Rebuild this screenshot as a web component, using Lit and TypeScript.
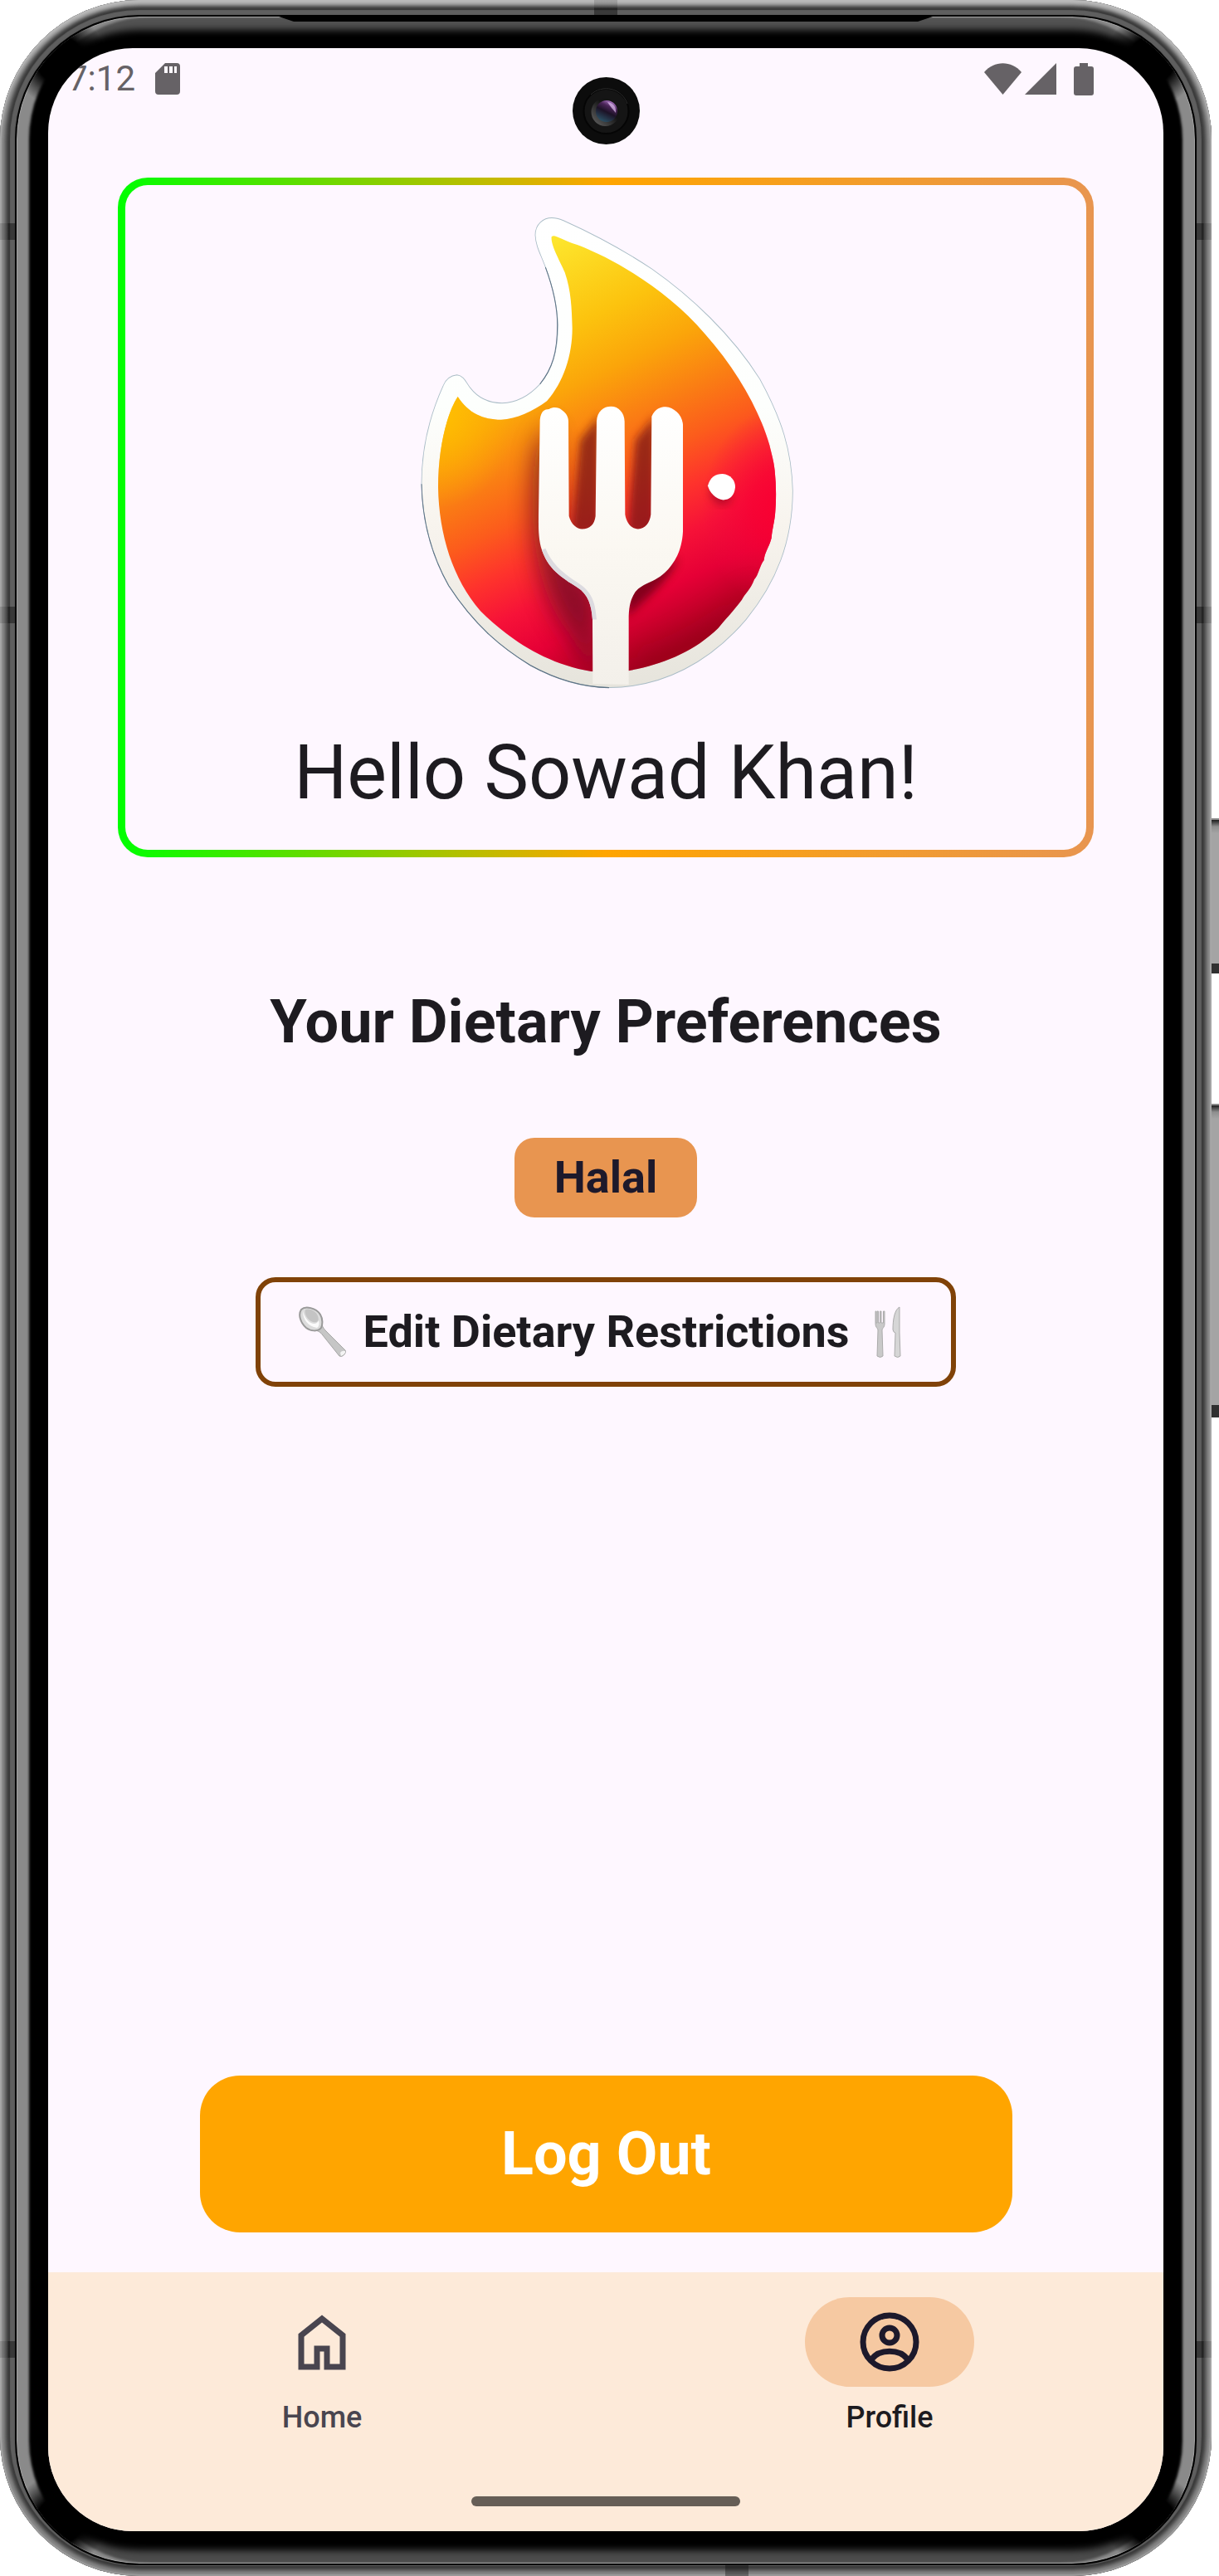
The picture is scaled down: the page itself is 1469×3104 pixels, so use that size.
import { LitElement, html, css, svg } from "lit";
import { customElement, property } from "lit/decorators.js";

@customElement("flame-logo")
class FlameLogo extends LitElement {
  static styles = css`
    :host { display: block; }
    svg { display: block; width: 460px; height: 576px; }
  `;

  render() {
    const inner = "M557,160 C562,156 568,157 576,160 C600,168 625,178 650,184 C690,196 710,205 750,220 C880,275 1010,350 1110,445 C1230,555 1310,675 1345,775 C1352,800 1360,820 1364,850 C1369,890 1370,930 1366,970 C1364,1000 1355,1020 1352,1050 C1342,1080 1328,1090 1325,1115 C1310,1130 1305,1160 1290,1172 C1278,1200 1255,1215 1245,1232 C1215,1265 1180,1295 1160,1315 C1060,1395 930,1430 800,1446 L700,1443 C530,1420 400,1345 300,1265 C200,1170 150,1040 147,900 C147,780 180,680 218,632 C255,680 310,700 375,700 C430,698 490,675 540,645 C600,590 632,510 632,430 C630,370 628,320 605,265 C590,235 553,185 557,160Z";
    const outer = "M558,104 C528,104 498,122 498,155 C500,190 520,215 535,250 C560,305 578,360 580,420 C580,500 560,550 515,595 C470,635 420,650 378,651 C330,651 290,635 262,605 C248,590 240,570 215,568 C190,570 175,580 165,600 C115,690 87,790 87,890 C90,1010 130,1110 185,1190 C280,1310 380,1375 480,1425 C580,1470 680,1490 765,1491 C960,1490 1130,1415 1260,1290 C1370,1180 1428,1060 1429,910 C1425,790 1390,700 1310,580 C1210,450 1060,335 920,255 C800,190 690,145 600,112 C585,107 572,104 558,104Z";
    const fork = "M515,700 C520,672 532,670 548,669 C565,660 585,665 592,670 C605,677 618,688 618,705 L620,985 C628,1010 650,1023 667,1023 C695,1023 712,1010 716,985 L720,705 C722,675 745,661 772,661 C800,661 820,680 821,705 L823,980 C828,1005 845,1022 870,1023 C895,1022 912,1005 916,980 L919,690 C932,668 950,662 970,662 C1000,664 1030,685 1032,715 L1032,1030 C1028,1090 1000,1122 975,1145 C930,1185 880,1180 855,1215 C840,1235 836,1260 836,1290 L836,1482 L706,1480 L705,1290 C702,1250 690,1215 650,1195 C590,1165 545,1140 522,1085 C508,1050 510,1010 510,985Z";
    return html`
      <svg viewBox="22 36 460 576" role="img" aria-label="Flame with a fork">
        <defs>
          <linearGradient id="fire" gradientUnits="userSpaceOnUse" x1="133" y1="342" x2="599" y2="1538">
            <stop offset="0" stop-color="#fde52c" />
            <stop offset=".2" stop-color="#fcc30e" />
            <stop offset=".33" stop-color="#fba50a" />
            <stop offset=".46" stop-color="#fa7c14" />
            <stop offset=".56" stop-color="#fc5c1c" />
            <stop offset=".66" stop-color="#fe332c" />
            <stop offset=".76" stop-color="#f61238" />
            <stop offset=".86" stop-color="#e60036" />
            <stop offset="1" stop-color="#a80020" />
          </linearGradient>
          <linearGradient id="rim" x1="0" y1="0" x2="0" y2="1">
            <stop offset="0" stop-color="#ffffff" />
            <stop offset=".4" stop-color="#fdfffd" />
            <stop offset=".65" stop-color="#f8f4ee" />
            <stop offset="1" stop-color="#e6e4dc" />
          </linearGradient>
          <linearGradient id="steel" x1="0" y1="0" x2="0" y2="1">
            <stop offset="0" stop-color="#ffffff" />
            <stop offset=".5" stop-color="#fbf8f2" />
            <stop offset="1" stop-color="#f3f0ea" />
          </linearGradient>
          <radialGradient id="left-glow" gradientUnits="userSpaceOnUse" cx="150" cy="680" r="280">
            <stop offset="0" stop-color="#ffc000" />
            <stop offset="1" stop-color="#ffb000" stop-opacity="0" />
          </radialGradient>
          <radialGradient id="right-glow" gradientUnits="userSpaceOnUse" cx="1400" cy="960" r="300">
            <stop offset="0" stop-color="#fa0030" />
            <stop offset=".4" stop-color="#f80034" stop-opacity=".7" />
            <stop offset="1" stop-color="#f20840" stop-opacity="0" />
          </radialGradient>
          <clipPath id="flame"><path d=${inner} /></clipPath>
          <filter id="soft" x="-40%" y="-30%" width="180%" height="160%"><feGaussianBlur stdDeviation="42" /></filter>
          <filter id="tight" x="-30%" y="-30%" width="160%" height="160%"><feGaussianBlur stdDeviation="14" /></filter>
        </defs>
        <g transform="scale(.33333 .40816)">
          <path d=${outer} fill="url(#rim)" stroke="#a9bcc6" stroke-width="2.5" />
          <path d="M535,250 C560,305 578,360 578,420 C578,500 560,550 515,595 M87,890 C90,1010 130,1110 185,1190 C280,1310 380,1375 480,1425 C580,1470 680,1490 765,1491" fill="none" stroke="#5d7385" stroke-width="3" />
          <path d=${inner} fill="url(#fire)" />
          <g clip-path="url(#flame)">
            <rect width="1560" height="1568" fill="url(#left-glow)" />
            <rect width="1560" height="1568" fill="url(#right-glow)" />
            <path d="M500,780 L560,720 L620,1100 L720,1200 L720,1480 L620,1330 C520,1230 460,1050 500,780Z" fill="#6a0a20" opacity=".75" filter="url(#soft)" />
            <path d="M660,760 L730,690 V1040 H630Z M860,760 L930,690 V1040 H830Z" fill="#7a1418" opacity=".75" filter="url(#tight)" />
            <path d="M1020,1110 C960,1190 900,1230 830,1280 V1180Z" fill="#6a0018" opacity=".8" filter="url(#tight)" />
            <path d="M1125,900 C1140,960 1190,960 1215,925Z" fill="#80001c" opacity=".6" filter="url(#tight)" />
            <path d="M1300,1200 C1200,1400 900,1480 830,1460 L860,1400 C1000,1380 1150,1290 1300,1200Z" fill="#8c0014" opacity=".5" filter="url(#soft)" />
          </g>
          <path d=${fork} fill="url(#steel)" />
          <path d="M522,1085 C545,1140 590,1165 650,1195 C690,1215 702,1250 705,1290 L720,1290 C715,1235 700,1205 650,1180 C590,1150 555,1120 535,1080Z" fill="#dddbe0" />
          <path d="M1122,895 C1130,870 1150,860 1175,860 C1205,862 1222,880 1221,900 C1218,925 1200,937 1178,937 C1150,935 1128,915 1122,895Z" fill="#fff" />
        </g>
      </svg>
    `;
  }
}

@customElement("status-bar")
class StatusBar extends LitElement {
  @property() time = "";

  static styles = css`
    :host {
      display: flex;
      justify-content: space-between;
      align-items: center;
      padding: 13px 84px 0 24px;
      color: #666266;
      font-size: 42px;
      line-height: 48px;
    }
    .group { display: flex; align-items: center; }
    .time { padding-right: 24px; }
    svg { display: block; fill: currentColor; }
    .signal { padding: 0 21px 0 4px; }
  `;

  render() {
    return html`
      <div class="group">
        <span class="time">${this.time}</span>
        <svg width="30" height="38" viewBox="0 0 30 38" aria-hidden="true">
          <path fill-rule="evenodd" d="M12 0H26a4 4 0 0 1 4 4V34a4 4 0 0 1-4 4H4a4 4 0 0 1-4-4V12ZM11 4v8h4V4ZM17 4v8h4V4ZM23 4v8h3V4Z" />
        </svg>
      </div>
      <div class="group">
        <svg width="45" height="38" viewBox="0 0 45 38" aria-hidden="true"><path d="M0 11C12-3.500 33-3.500 45 11L22.500 38Z" /></svg>
        <svg class="signal" width="38" height="38" viewBox="0 0 38 38" aria-hidden="true"><path d="M38 0V38H0Z" /></svg>
        <svg width="24" height="39" viewBox="0 0 24 39" aria-hidden="true"><path d="M7 0H17V4H21a3 3 0 0 1 3 3V36a3 3 0 0 1-3 3H3a3 3 0 0 1-3-3V7a3 3 0 0 1 3-3H7Z" /></svg>
      </div>
    `;
  }
}

interface Tab {
  label: string;
  href: string;
  active: boolean;
  icon: unknown;
}

@customElement("tab-bar")
class TabBar extends LitElement {
  static styles = css`
    :host { display: block; background: #fdead9; }
    .tabs { display: flex; gap: 24px; padding-top: 30px; }
    .tab {
      flex: 1;
      display: flex;
      flex-direction: column;
      align-items: center;
      gap: 16px;
      color: #49454f;
      font-size: 36px;
      line-height: 42px;
      font-weight: 500;
      text-decoration: none;
    }
    .tab.active { color: #1d1b20; }
    .pill {
      display: flex;
      align-items: center;
      justify-content: center;
      width: 204px;
      height: 108px;
      border-radius: 54px;
    }
    .active .pill { background: #f6c9a2; color: #1d192b; }
    .pill svg { display: block; width: 72px; height: 72px; }
    .handle {
      width: 324px;
      height: 12px;
      margin: 74px auto 30px;
      border-radius: 6px;
      background: #665e56;
    }
    :host { display: flow-root; }
  `;

  private tabs: Tab[] = [
    {
      label: "Home",
      href: "#home",
      active: false,
      icon: svg`<path d="M11 28 36 8 61 28V66H42V44H30V66H11Z" fill="none" stroke="currentColor" stroke-width="7" />`,
    },
    {
      label: "Profile",
      href: "#profile",
      active: true,
      icon: svg`
        <circle cx="36" cy="36" r="32" fill="none" stroke="currentColor" stroke-width="7" />
        <circle cx="36" cy="28" r="9" fill="none" stroke="currentColor" stroke-width="7" />
        <path d="M14 57C24 44 48 44 58 57" fill="none" stroke="currentColor" stroke-width="7" />`,
    },
  ];

  render() {
    return html`
      <nav class="tabs">
        ${this.tabs.map(
          (t) => html`
            <a class="tab ${t.active ? "active" : ""}" href=${t.href}>
              <span class="pill"><svg viewBox="0 0 72 72" aria-hidden="true">${t.icon}</svg></span>
              ${t.label}
            </a>
          `,
        )}
      </nav>
      <div class="handle"></div>
    `;
  }
}

@customElement("profile-screen")
class ProfileScreen extends LitElement {
  @property() name = "";
  @property({ type: Array }) preferences: string[] = [];

  static styles = css`
    :host {
      flex: 1;
      display: flex;
      flex-direction: column;
      align-items: center;
      color: #1d1b20;
    }
    h1, h2, ul { margin: 0; padding: 0; }
    .card {
      align-self: stretch;
      margin: 95px 84px 0;
      padding: 9px;
      border-radius: 36px;
      background: linear-gradient(90deg, #00ff00, #ffa500 50%, #e89550);
    }
    .inner {
      display: flex;
      flex-direction: column;
      align-items: center;
      gap: 50px;
      padding: 33px 0 43px;
      border-radius: 27px;
      background: #fef7ff;
    }
    flame-logo { padding-left: 2px; }
    h1 { font-size: 90px; line-height: 99px; font-weight: 400; }
    h2 { margin-top: 156px; font-size: 72px; line-height: 86px; font-weight: 700; }
    .chips { display: flex; gap: 24px; margin-top: 96px; list-style: none; }
    .chip {
      padding: 0 48px;
      border-radius: 24px;
      background: #e89550;
      color: #1d192b;
      font-size: 54px;
      line-height: 96px;
      font-weight: 700;
    }
    button { font-family: inherit; cursor: pointer; }
    .edit {
      display: flex;
      align-items: center;
      gap: 20px;
      margin-top: 72px;
      padding: 0 46px;
      border: 6px solid #804208;
      border-radius: 24px;
      background: transparent;
      color: #1d1b20;
      font-size: 54px;
      line-height: 120px;
      font-weight: 700;
    }
    .edit svg { display: block; }
    .logout {
      align-self: stretch;
      margin: auto 182px 48px 183px;
      padding: 0;
      border: 0;
      border-radius: 48px;
      background: #ffa500;
      color: #fff;
      font-size: 72px;
      line-height: 189px;
      font-weight: 700;
    }
  `;

  render() {
    return html`
      <section class="card">
        <div class="inner">
          <flame-logo></flame-logo>
          <h1>Hello ${this.name}!</h1>
        </div>
      </section>
      <h2>Your Dietary Preferences</h2>
      <ul class="chips">
        ${this.preferences.map((p) => html`<li class="chip">${p}</li>`)}
      </ul>
      <button class="edit" type="button">
        <svg width="58" height="62" viewBox="0 0 58 62" aria-hidden="true">
          <path d="M28 22C29 26 31 28 34 31L56 53C58 56 53 62 49 60L29 35C26 31 24 30 20 29Z" fill="#c6c6c6" stroke="#a4a4a4" />
          <path d="M50 56Q52 53 56 54Q57 57 51 60Z" fill="#f4f4f4" />
          <path d="M3 4C8-1 21 2 26 10C29 15 29 22 27 26C23 31 14 30 9 26C2 20-1 10 3 4Z" fill="#dcdcdc" stroke="#999" stroke-width="2" />
          <path d="M5 6C5 16 11 24 22 26C25 24 25 20 24 17C21 25 9 21 5 6Z" fill="#fbfbfb" />
          <path d="M8 4C14 2 21 6 23 12C25 18 22 20 17 19C11 17 6 9 8 4Z" fill="#c4c4c4" />
        </svg>
        <span>Edit Dietary Restrictions</span>
        <svg width="57" height="62" viewBox="0 0 57 62" aria-hidden="true">
          <path d="M12 6V21C12 26 15 26 15 29L14 60q4 3 7 0L20 29C20 26 23 26 23 21V6H21.500V20H19V6H17.500V20H15.500V6H14V20H13V6Z" fill="#c9c9c9" stroke="#ababab" />
          <path d="M41 1C35 4 33 16 33 28Q33 31 36 32L35 60q4 3 7 0L41 32Z" fill="#d6d6d6" stroke="#ababab" />
        </svg>
      </button>
      <button class="logout" type="button">Log Out</button>
    `;
  }
}

@customElement("app-root")
class AppRoot extends LitElement {
  static styles = css`
    :host {
      display: grid;
      grid-template-columns: minmax(0, 1fr) 9px;
      min-height: 100vh;
      background: #fff;
      font-family: Roboto, "Noto Sans", sans-serif;
    }
    .rim {
      position: relative;
      display: flex;
      padding: 18px 18px 13px;
      border-radius: 168px;
      background: #5a5a5a;
      box-shadow:
        inset 0 5px 5px #bcbcbc,
        inset 0 0 0 2px #999,
        inset 0 0 5px 7px #8a8a8a,
        inset 0 0 1px 12px #363636,
        inset 0 0 1px 17px #5f5f5f;
    }
    .bezel {
      flex: 1;
      display: flex;
      border-radius: 150px;
      border: 2px solid #000;
      background: #000;
      box-shadow:
        inset 0 0 0 1px #a2a2a2,
        inset 15px 0 3px #8a8a8a,
        inset -15px 0 3px #8a8a8a,
        inset 0 16px 8px #525252,
        inset 0 -16px 8px #4c4c4c;
    }
    .glass {
      flex: 1;
      display: flex;
      padding: 38px 38px 39px;
      border-radius: 148px;
      background:
        radial-gradient(circle at 52px 52px, #000 28px, transparent 56px),
        radial-gradient(circle at calc(100% - 52px) 52px, #000 28px, transparent 56px),
        radial-gradient(circle at 52px calc(100% - 52px), #000 28px, transparent 56px),
        radial-gradient(circle at calc(100% - 52px) calc(100% - 52px), #000 28px, transparent 56px);
    }
    .screen {
      flex: 1;
      display: flex;
      flex-direction: column;
      min-width: 0;
      border-radius: 102px;
      overflow: hidden;
      background: #fef7ff;
    }
    .speaker {
      position: absolute;
      top: 20px;
      left: 336px;
      right: 336px;
      height: 6px;
      background: #000;
      clip-path: polygon(0 0, 100% 0, calc(100% - 18px) 100%, 18px 100%);
    }
    .camera {
      position: absolute;
      top: 93px;
      left: calc(50% - 40px);
      width: 81px;
      height: 81px;
    }
    .seam { position: absolute; }
    .seam.left, .seam.right { width: 18px; height: 20px; }
    .seam.left { left: 0; background: linear-gradient(90deg, #0002 9px, #0006 10px); }
    .seam.right { right: 0; background: linear-gradient(270deg, #0002 9px, #0006 10px); }
    .upper { top: 269px; }
    .middle { top: 731px; }
    .lower { bottom: 263px; }
    .seam.top {
      top: 0;
      left: calc(50% - 14px);
      width: 28px;
      height: 18px;
      background: linear-gradient(#0002 9px, #0006 10px);
    }
    .seam.bottom {
      bottom: 0;
      left: calc(60% - 2px);
      width: 28px;
      height: 13px;
      background: #0005;
    }
    .rail { padding-top: 986px; }
    .key {
      box-sizing: border-box;
      height: 187px;
      border-top: 2px solid #8a8a8a;
      border-bottom: 12px solid #303030;
      background: linear-gradient(#1c1c1c, #8e8e8e 8px, #a4a4a4 16px);
    }
    .key.volume { height: 378px; margin-top: 157px; border-bottom-width: 15px; }
  `;

  render() {
    return html`
      <div class="rim">
        <div class="bezel">
          <div class="glass">
            <div class="screen">
              <status-bar time="7:12"></status-bar>
              <profile-screen name="Sowad Khan" .preferences=${["Halal"]}></profile-screen>
              <tab-bar></tab-bar>
            </div>
          </div>
        </div>
        <div class="speaker"></div>
        <svg class="camera" viewBox="0 0 81 81" aria-hidden="true">
          <defs>
            <linearGradient id="lens" x1=".8" y1="0" x2=".3" y2="1">
              <stop offset="0" stop-color="#c58be0" />
              <stop offset=".3" stop-color="#4a2458" />
              <stop offset=".55" stop-color="#1c1226" />
              <stop offset="1" stop-color="#2c5468" />
            </linearGradient>
            <linearGradient id="ring" x1="1" y1="0" x2="0" y2="1">
              <stop offset=".4" stop-color="#141414" />
              <stop offset="1" stop-color="#6a6a6a" />
            </linearGradient>
          </defs>
          <circle cx="40.500" cy="40.500" r="40.500" fill="#0c0c0c" />
          <circle cx="40.500" cy="41" r="27" fill="#151515" stroke="#050505" stroke-width="2" />
          <path d="M22 21A27 27 0 0 1 66 32" fill="none" stroke="#2c2c2c" />
          <circle cx="39.500" cy="42" r="17" fill="url(#ring)" />
          <circle cx="41" cy="41" r="13" fill="url(#lens)" />
          <path d="M42 30C49 31 53 36 52 43C49 39 45 35 42 30Z" fill="#e0c0f0" opacity=".7" />
        </svg>
        <div class="seam left upper"></div>
        <div class="seam right upper"></div>
        <div class="seam left middle"></div>
        <div class="seam right middle"></div>
        <div class="seam left lower"></div>
        <div class="seam right lower"></div>
        <div class="seam top"></div>
        <div class="seam bottom"></div>
      </div>
      <div class="rail">
        <div class="key"></div>
        <div class="key volume"></div>
      </div>
    `;
  }
}
